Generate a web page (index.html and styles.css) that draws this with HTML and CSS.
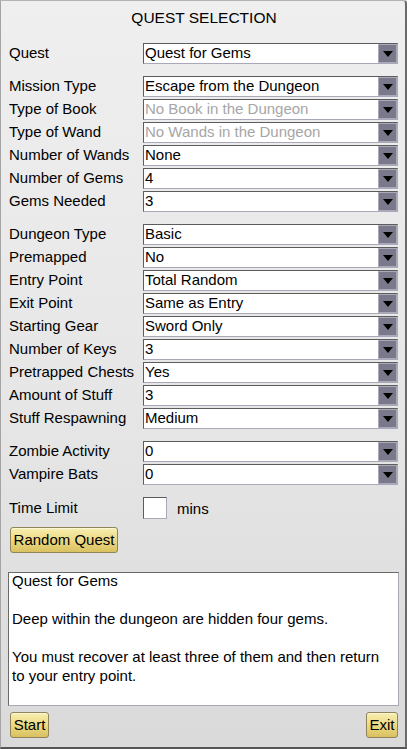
FILE: index.html
```html
<!DOCTYPE html>
<html>
<head>
<meta charset="utf-8">
<title>Quest Selection</title>
<link rel="stylesheet" href="styles.css">
</head>
<body>
<div class="window">
  <div class="title">QUEST SELECTION</div>

  <div class="group">
    <div class="row"><span class="label">Quest</span><div class="combo"><span class="combo-text">Quest for Gems</span><span class="combo-btn"><svg width="10" height="6" viewBox="0 0 10 6"><polygon points="0,0 10,0 5,6" fill="#000"/></svg></span></div></div>
  </div>

  <div class="group">
    <div class="row"><span class="label">Mission Type</span><div class="combo"><span class="combo-text">Escape from the Dungeon</span><span class="combo-btn"><svg width="10" height="6" viewBox="0 0 10 6"><polygon points="0,0 10,0 5,6" fill="#000"/></svg></span></div></div>
    <div class="row"><span class="label">Type of Book</span><div class="combo"><span class="combo-text disabled">No Book in the Dungeon</span><span class="combo-btn"><svg width="10" height="6" viewBox="0 0 10 6"><polygon points="0,0 10,0 5,6" fill="#000"/></svg></span></div></div>
    <div class="row"><span class="label">Type of Wand</span><div class="combo"><span class="combo-text disabled">No Wands in the Dungeon</span><span class="combo-btn"><svg width="10" height="6" viewBox="0 0 10 6"><polygon points="0,0 10,0 5,6" fill="#000"/></svg></span></div></div>
    <div class="row"><span class="label">Number of Wands</span><div class="combo"><span class="combo-text">None</span><span class="combo-btn"><svg width="10" height="6" viewBox="0 0 10 6"><polygon points="0,0 10,0 5,6" fill="#000"/></svg></span></div></div>
    <div class="row"><span class="label">Number of Gems</span><div class="combo"><span class="combo-text">4</span><span class="combo-btn"><svg width="10" height="6" viewBox="0 0 10 6"><polygon points="0,0 10,0 5,6" fill="#000"/></svg></span></div></div>
    <div class="row"><span class="label">Gems Needed</span><div class="combo"><span class="combo-text">3</span><span class="combo-btn"><svg width="10" height="6" viewBox="0 0 10 6"><polygon points="0,0 10,0 5,6" fill="#000"/></svg></span></div></div>
  </div>

  <div class="group">
    <div class="row"><span class="label">Dungeon Type</span><div class="combo"><span class="combo-text">Basic</span><span class="combo-btn"><svg width="10" height="6" viewBox="0 0 10 6"><polygon points="0,0 10,0 5,6" fill="#000"/></svg></span></div></div>
    <div class="row"><span class="label">Premapped</span><div class="combo"><span class="combo-text">No</span><span class="combo-btn"><svg width="10" height="6" viewBox="0 0 10 6"><polygon points="0,0 10,0 5,6" fill="#000"/></svg></span></div></div>
    <div class="row"><span class="label">Entry Point</span><div class="combo"><span class="combo-text">Total Random</span><span class="combo-btn"><svg width="10" height="6" viewBox="0 0 10 6"><polygon points="0,0 10,0 5,6" fill="#000"/></svg></span></div></div>
    <div class="row"><span class="label">Exit Point</span><div class="combo"><span class="combo-text">Same as Entry</span><span class="combo-btn"><svg width="10" height="6" viewBox="0 0 10 6"><polygon points="0,0 10,0 5,6" fill="#000"/></svg></span></div></div>
    <div class="row"><span class="label">Starting Gear</span><div class="combo"><span class="combo-text">Sword Only</span><span class="combo-btn"><svg width="10" height="6" viewBox="0 0 10 6"><polygon points="0,0 10,0 5,6" fill="#000"/></svg></span></div></div>
    <div class="row"><span class="label">Number of Keys</span><div class="combo"><span class="combo-text">3</span><span class="combo-btn"><svg width="10" height="6" viewBox="0 0 10 6"><polygon points="0,0 10,0 5,6" fill="#000"/></svg></span></div></div>
    <div class="row"><span class="label">Pretrapped Chests</span><div class="combo"><span class="combo-text">Yes</span><span class="combo-btn"><svg width="10" height="6" viewBox="0 0 10 6"><polygon points="0,0 10,0 5,6" fill="#000"/></svg></span></div></div>
    <div class="row"><span class="label">Amount of Stuff</span><div class="combo"><span class="combo-text">3</span><span class="combo-btn"><svg width="10" height="6" viewBox="0 0 10 6"><polygon points="0,0 10,0 5,6" fill="#000"/></svg></span></div></div>
    <div class="row"><span class="label">Stuff Respawning</span><div class="combo"><span class="combo-text">Medium</span><span class="combo-btn"><svg width="10" height="6" viewBox="0 0 10 6"><polygon points="0,0 10,0 5,6" fill="#000"/></svg></span></div></div>
  </div>

  <div class="group">
    <div class="row"><span class="label">Zombie Activity</span><div class="combo"><span class="combo-text">0</span><span class="combo-btn"><svg width="10" height="6" viewBox="0 0 10 6"><polygon points="0,0 10,0 5,6" fill="#000"/></svg></span></div></div>
    <div class="row"><span class="label">Vampire Bats</span><div class="combo"><span class="combo-text">0</span><span class="combo-btn"><svg width="10" height="6" viewBox="0 0 10 6"><polygon points="0,0 10,0 5,6" fill="#000"/></svg></span></div></div>
  </div>

  <div class="time-row">
    <span class="label">Time Limit</span>
    <span class="time-input"></span>
    <span class="mins">mins</span>
  </div>

  <div class="random-row"><span class="btn btn-random">Random Quest</span></div>

  <div class="description">
    <p>Quest for Gems</p>
    <p>&nbsp;</p>
    <p>Deep within the dungeon are hidden four gems.</p>
    <p>&nbsp;</p>
    <p>You must recover at least three of them and then return to your entry point.</p>
  </div>

  <div class="footer">
    <span class="btn btn-start">Start</span>
    <span class="btn btn-exit">Exit</span>
  </div>
</div>
</body>
</html>
```
FILE: styles.css
```css
html, body {
  margin: 0;
  padding: 0;
  background: #dcdcdc;
}

body {
  font-family: "Liberation Sans", Arial, sans-serif;
  font-size: 15px;
  color: #000;
}

.window {
  width: 407px;
  height: 749px;
  box-sizing: border-box;
  border-left: 1px solid #a4a4a4;
  border-top: 1px solid #b4b4b4;
  border-right: 2px solid #6a6a6a;
  border-bottom: 2px solid #555;
  border-top-right-radius: 4px;
  background: linear-gradient(to bottom, #efefef 0%, #e6e6e6 55%, #dadada 100%);
  padding: 0 6px 0 7px;
  display: flex;
  flex-direction: column;
}

.title {
  text-align: center;
  font-size: 15.5px;
  line-height: 18px;
  padding-top: 8px;
  margin-bottom: 16px;
  margin-left: 1px;
}

.group {
  display: flex;
  flex-direction: column;
  gap: 2px;
  margin-bottom: 12px;
}

.row {
  display: flex;
  align-items: flex-start;
  height: 21px;
}

.label {
  width: 134px;
  padding-left: 1px;
  line-height: 20px;
  white-space: nowrap;
  flex: none;
}

.combo {
  width: 255px;
  height: 21px;
  box-sizing: border-box;
  border-top: 1px solid #5c5c5c;
  border-left: 1px solid #5c5c5c;
  border-bottom: 1px solid #a8a8b8;
  border-right: 1px solid #a8a8b8;
  background: #fff;
  display: flex;
  align-items: flex-start;
}

.combo-text {
  flex: 1;
  padding-left: 1px;
  line-height: 18px;
  white-space: nowrap;
  overflow: hidden;
}

.combo-text.disabled {
  color: #a6a6a6;
}

.combo-btn {
  width: 19px;
  height: 19px;
  box-sizing: border-box;
  border: 1px solid #a9a9b8;
  background: #79798b;
  display: flex;
  align-items: center;
  justify-content: center;
  flex: none;
}

.combo-btn svg {
  display: block;
  margin-top: 1px;
}

.time-row {
  display: flex;
  align-items: center;
  height: 22px;
  margin-bottom: 8px;
}

.time-input {
  width: 24px;
  height: 22px;
  box-sizing: border-box;
  border-top: 1px solid #5c5c5c;
  border-left: 1px solid #5c5c5c;
  border-bottom: 1px solid #a8a8b8;
  border-right: 1px solid #a8a8b8;
  background: #fff;
  flex: none;
}

.mins {
  margin-left: 10px;
}

.random-row {
  display: flex;
  margin-bottom: 19px;
}

.btn {
  display: inline-block;
  box-sizing: border-box;
  height: 26px;
  line-height: 24px;
  border: 1px solid #8f8558;
  border-radius: 3px;
  background: linear-gradient(to bottom, #f7eeb0 0%, #ecd983 50%, #d9c160 100%);
  box-shadow: inset 0 1px 0 #fbf6d6;
  text-align: center;
  white-space: nowrap;
}

.btn-random {
  width: 108px;
  margin-left: 2px;
}

.description {
  height: 134px;
  box-sizing: border-box;
  border-top: 1px solid #6a6a6a;
  border-left: 1px solid #6a6a6a;
  border-bottom: 1px solid #a8a8b8;
  border-right: 1px solid #a8a8b8;
  background: #fff;
  padding: 0 8px 0 3px;
  line-height: 19px;
  margin-bottom: 6px;
  overflow: hidden;
}

.description p {
  margin: 0;
}

.description p:first-child {
  margin-top: -2px;
}

.footer {
  display: flex;
  justify-content: space-between;
  padding: 0 1px 0 2px;
}

.btn-start {
  width: 39px;
}

.btn-exit {
  width: 32px;
}
```
